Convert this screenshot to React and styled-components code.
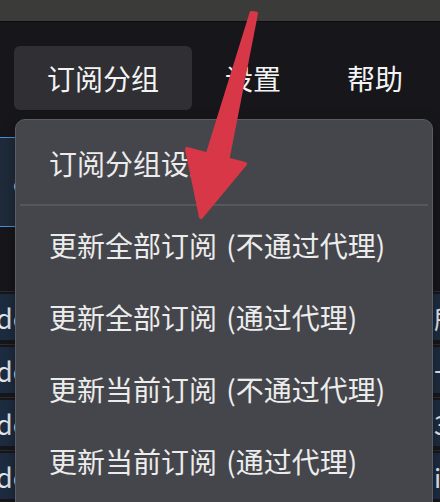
import React from "react";
import styled, { createGlobalStyle } from "styled-components";

const GlobalStyle = createGlobalStyle`
  html, body {
    margin: 0;
    padding: 0;
    background: #17161b;
    overflow: hidden;
  }
  body {
    font-family: "Noto Sans CJK SC", "Noto Sans", sans-serif;
  }
`;

const Page = styled.div`
  position: relative;
  width: 440px;
  height: 502px;
  overflow: hidden;
  background: #17161b;
  color: #f0f0f0;
`;

const TitleBar = styled.div`
  height: 21px;
  background: #3b3b39;
  border-bottom: 1px solid #0d0d0d;
`;

const MenuBar = styled.nav`
  display: flex;
  padding: 24px 14px 8px;
`;

const MenuButton = styled.div`
  height: 64px;
  line-height: 64px;
  padding: 0 33px;
  font-size: 28px;
  border-radius: 6px;
  color: #f3f3f3;
  white-space: nowrap;
  background: ${(p) => (p.$active ? "#2f2f34" : "transparent")};
`;

const Content = styled.main`
  display: flex;
  flex-direction: column;
`;

const SelectedCard = styled.div`
  margin-top: 19px;
  height: 88px;
  width: 320px;
  border-top: 1px solid #4b90e0;
  border-bottom: 1px solid #4b90e0;
  background: #1f2b3b;
  display: flex;
  align-items: center;
  padding-left: 13px;
  font-size: 24px;
  color: #e6e9ee;
`;

const List = styled.div`
  margin-top: 64px;
  display: flex;
  flex-direction: column;
`;

const Row = styled.div`
  border-top: 1px solid #2c2c31;
  padding: 2px 0 4px;
`;

const RowBody = styled.div`
  height: 46px;
  background: #1d2c40;
  display: grid;
  grid-template-columns: 434px 1fr;
  align-items: center;
  font-size: 27px;
  color: #e4e8ee;
  white-space: nowrap;
  overflow: hidden;
`;

const RowName = styled.span`
  margin-left: -4px;
`;

const RowTail = styled.span`
  font-size: 26px;
`;

const Dropdown = styled.div`
  position: absolute;
  top: 119px;
  left: 15px;
  width: 416px;
  height: 420px;
  background: #45464b;
  border: 1px solid #5d5e62;
  border-radius: 10px;
  padding: 7px 0;
  box-shadow: 0 4px 14px rgba(0, 0, 0, 0.35);
  z-index: 5;
`;

const Item = styled.div`
  height: 72px;
  line-height: 72px;
  padding-left: 33px;
  font-size: 28px;
  color: #ececec;
  white-space: nowrap;
`;

const Paren = styled.span`
  margin-left: 3px;
`;

const Separator = styled.div`
  height: 2px;
  margin: 5px 4px 3px;
  background: #56575b;
`;

const Arrow = styled.svg`
  position: absolute;
  top: 0;
  left: 0;
  z-index: 10;
  pointer-events: none;
`;

const rows = [
  { name: "docker-hub", tail: "所" },
  { name: "docs-node", tail: "一" },
  { name: "download", tail: "3" },
  { name: "domain", tail: "il" },
];

const updates = [
  ["更新全部订阅", "(不通过代理)"],
  ["更新全部订阅", "(通过代理)"],
  ["更新当前订阅", "(不通过代理)"],
  ["更新当前订阅", "(通过代理)"],
];

export default function App() {
  return (
    <>
      <GlobalStyle />
      <Page>
        <TitleBar />
        <MenuBar>
          <MenuButton $active>订阅分组</MenuButton>
          <MenuButton>设置</MenuButton>
          <MenuButton>帮助</MenuButton>
        </MenuBar>
        <Content>
          <SelectedCard>clash</SelectedCard>
          <List>
            {rows.map((r) => (
              <Row key={r.name}>
                <RowBody>
                  <RowName>{r.name}</RowName>
                  <RowTail>{r.tail}</RowTail>
                </RowBody>
              </Row>
            ))}
          </List>
        </Content>
        <Dropdown>
          <Item>订阅分组设置</Item>
          <Separator />
          {updates.map(([a, b]) => (
            <Item key={a + b}>
              {a} <Paren>{b}</Paren>
            </Item>
          ))}
        </Dropdown>
        <Arrow width="440" height="502" viewBox="0 0 440 502">
          <polygon
            points="251.5,13 256,13.5 227.4,159.5 245,164 201,217 187,149 207.7,154.4"
            fill="#d73747"
            stroke="#d73747"
            strokeWidth="4"
            strokeLinejoin="round"
          />
        </Arrow>
      </Page>
    </>
  );
}
